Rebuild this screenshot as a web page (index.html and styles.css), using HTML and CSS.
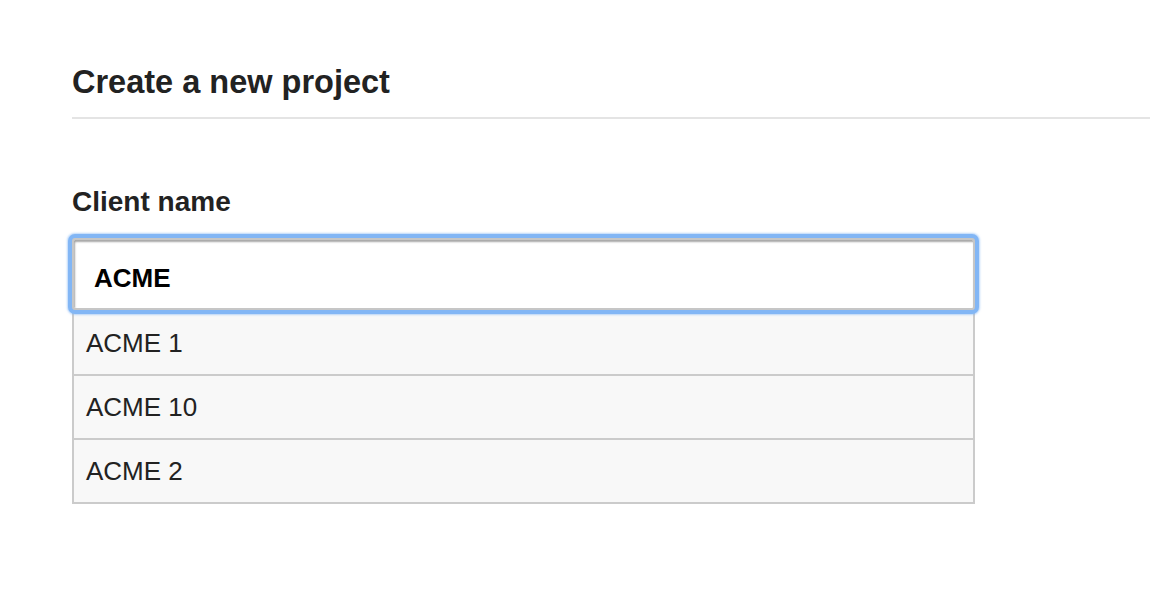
FILE: index.html
```html
<!DOCTYPE html>
<html>
<head>
<meta charset="utf-8">
<link rel="stylesheet" href="styles.css">
</head>
<body>
<div class="page">
  <h1 class="title">Create a new project</h1>
  <div class="rule"></div>
  <label class="label" for="client">Client name</label>
  <div class="combo">
    <input id="client" class="field" type="text" value="ACME">
    <ul class="list">
      <li class="item">ACME 1</li>
      <li class="item">ACME 10</li>
      <li class="item">ACME 2</li>
    </ul>
  </div>
</div>
</body>
</html>
```
FILE: styles.css
```css
html, body {
  margin: 0;
  padding: 0;
  background: #fff;
}
body {
  font-family: "Liberation Sans", Arial, sans-serif;
  color: #222;
}
.page {
  padding: 62px 0 0 72px;
}
.title {
  margin: 0;
  font-size: 32.5px;
  line-height: 40px;
  font-weight: bold;
  color: #222;
}
.rule {
  margin-top: 15px;
  height: 2px;
  background: #e4e4e4;
}
.label {
  display: block;
  margin-top: 67px;
  font-size: 28px;
  line-height: 32px;
  font-weight: bold;
  color: #222;
}
.combo {
  margin-top: 20px;
  width: 903px;
}
.field {
  position: relative;
  z-index: 1;
  display: block;
  box-sizing: border-box;
  width: 100%;
  height: 72px;
  margin: 0;
  padding: 8px 0 0 20px;
  border: 2px solid #c6c6c6;
  border-radius: 3px;
  background: #fff;
  font-family: "Liberation Sans", Arial, sans-serif;
  font-size: 26px;
  font-weight: bold;
  color: #000;
  box-shadow: inset 1px 2px 2px rgba(0, 0, 0, 0.35), 0 0 0 4px #82b6f5, 0 0 2px 5px rgba(130, 182, 245, 0.55);
  outline: none;
}
.list {
  list-style: none;
  margin: 2px 0 0 0;
  padding: 0;
  border: 2px solid #cbcbcb;
  border-top: none;
  background: #f8f8f8;
}
.item {
  display: flex;
  align-items: center;
  height: 62px;
  padding-left: 12px;
  font-size: 26px;
  color: #222;
  border-top: 2px solid #cbcbcb;
}
.item:first-child {
  border-top: none;
}
```
